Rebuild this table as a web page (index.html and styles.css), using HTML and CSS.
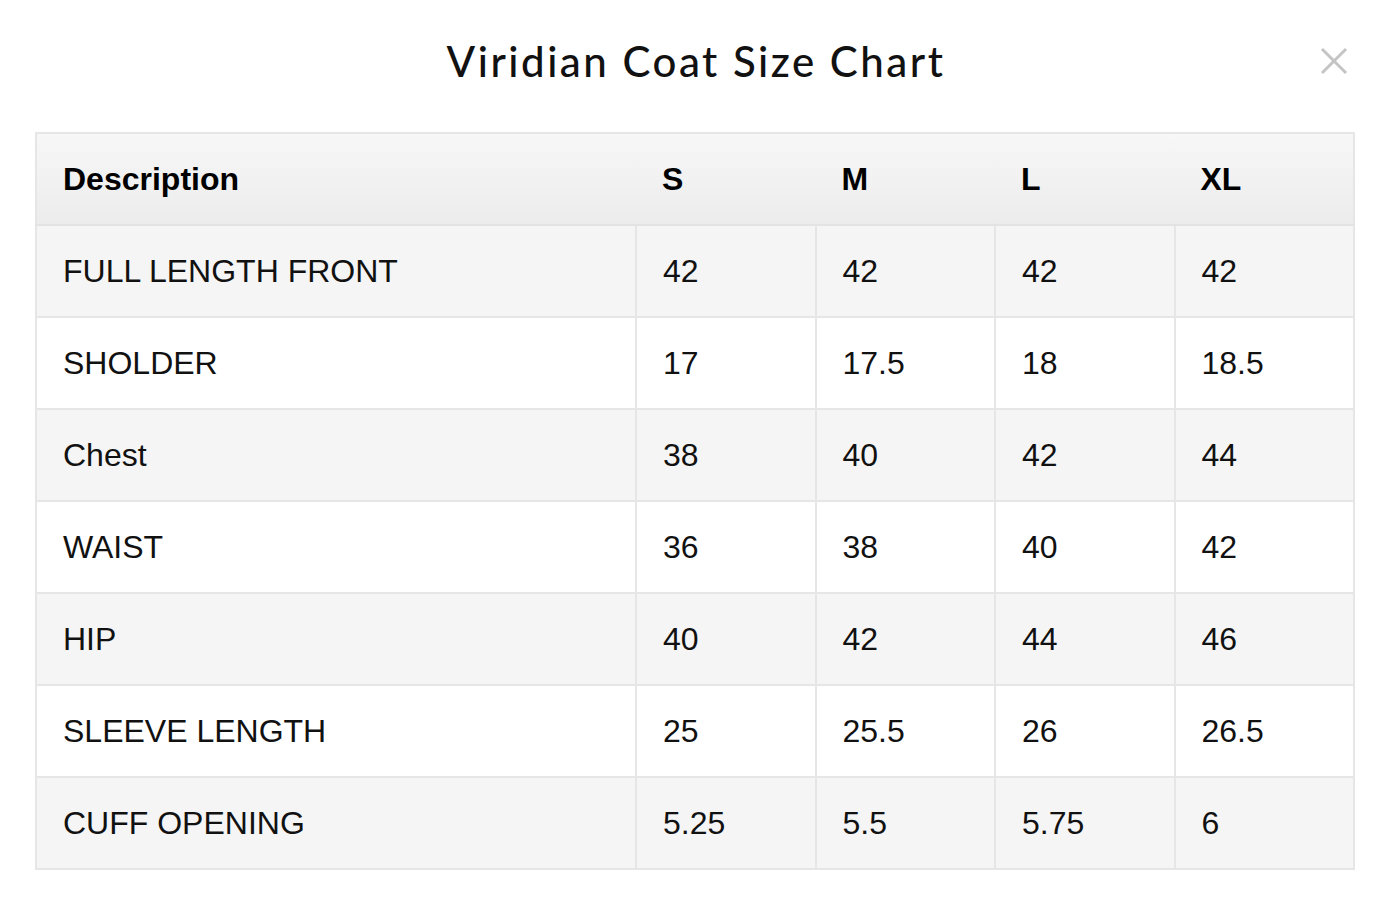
FILE: index.html
```html
<!DOCTYPE html>
<html lang="en">
<head>
<meta charset="utf-8">
<title>Viridian Coat Size Chart</title>
<link rel="stylesheet" href="styles.css">
</head>
<body>
<div class="modal">
  <div class="modal-head">
    <span class="spacer"></span>
    <h1 class="title">Viridian Coat Size Chart</h1>
    <button class="close" aria-label="Close">
      <svg width="28" height="28" viewBox="0 0 28 28"><path d="M2 2 L26 26 M26 2 L2 26" stroke="#c4c4c4" stroke-width="3" fill="none"/></svg>
    </button>
  </div>
  <table class="chart">
    <thead>
      <tr><th class="desc">Description</th><th>S</th><th>M</th><th>L</th><th>XL</th></tr>
    </thead>
    <tbody>
      <tr><td>FULL LENGTH FRONT</td><td>42</td><td>42</td><td>42</td><td>42</td></tr>
      <tr><td>SHOLDER</td><td>17</td><td>17.5</td><td>18</td><td>18.5</td></tr>
      <tr><td>Chest</td><td>38</td><td>40</td><td>42</td><td>44</td></tr>
      <tr><td>WAIST</td><td>36</td><td>38</td><td>40</td><td>42</td></tr>
      <tr><td>HIP</td><td>40</td><td>42</td><td>44</td><td>46</td></tr>
      <tr><td>SLEEVE LENGTH</td><td>25</td><td>25.5</td><td>26</td><td>26.5</td></tr>
      <tr><td>CUFF OPENING</td><td>5.25</td><td>5.5</td><td>5.75</td><td>6</td></tr>
    </tbody>
  </table>
</div>
</body>
</html>
```

FILE: styles.css
```css
* { box-sizing: border-box; }
html, body { margin: 0; padding: 0; background: #fff; }
body { font-family: "Liberation Sans", Arial, sans-serif; color: #111; }

.modal { padding: 0 37px 0 35px; }

.modal-head {
  display: grid;
  grid-template-columns: 1fr auto 1fr;
  align-items: center;
  height: 132px;
  padding-bottom: 10px;
}
.title {
  margin: 0;
  font-family: Lato, "Open Sans", sans-serif;
  font-weight: 500;
  font-size: 42px;
  letter-spacing: 2.5px;
  color: #111;
  padding-left: 2px;
}
.close {
  justify-self: end;
  margin-right: 7px;
  margin-top: 0;
  background: none;
  border: 0;
  padding: 0;
  width: 28px;
  height: 28px;
  cursor: pointer;
}
.close svg { display: block; }

.chart {
  width: 1320px;
  border-collapse: collapse;
  border: 2px solid #e6e6e6;
  table-layout: fixed;
  font-size: 32px;
}
.chart th, .chart td {
  text-align: left;
  padding: 0 0 0 26px;
  vertical-align: middle;
}
.chart th {
  font-weight: bold;
  height: 92px;
  background: linear-gradient(#f7f7f7, #ececec);
  border-bottom: 2px solid #e3e3e3;
  color: #000;
}
.chart th.desc { width: 600px; }
.chart td {
  height: 92px;
  border: 2px solid #e6e6e6;
  color: #111;
}
.chart tbody tr:nth-child(odd) td { background: #f5f5f5; }
.chart tbody tr:nth-child(even) td { background: #fff; }
```
